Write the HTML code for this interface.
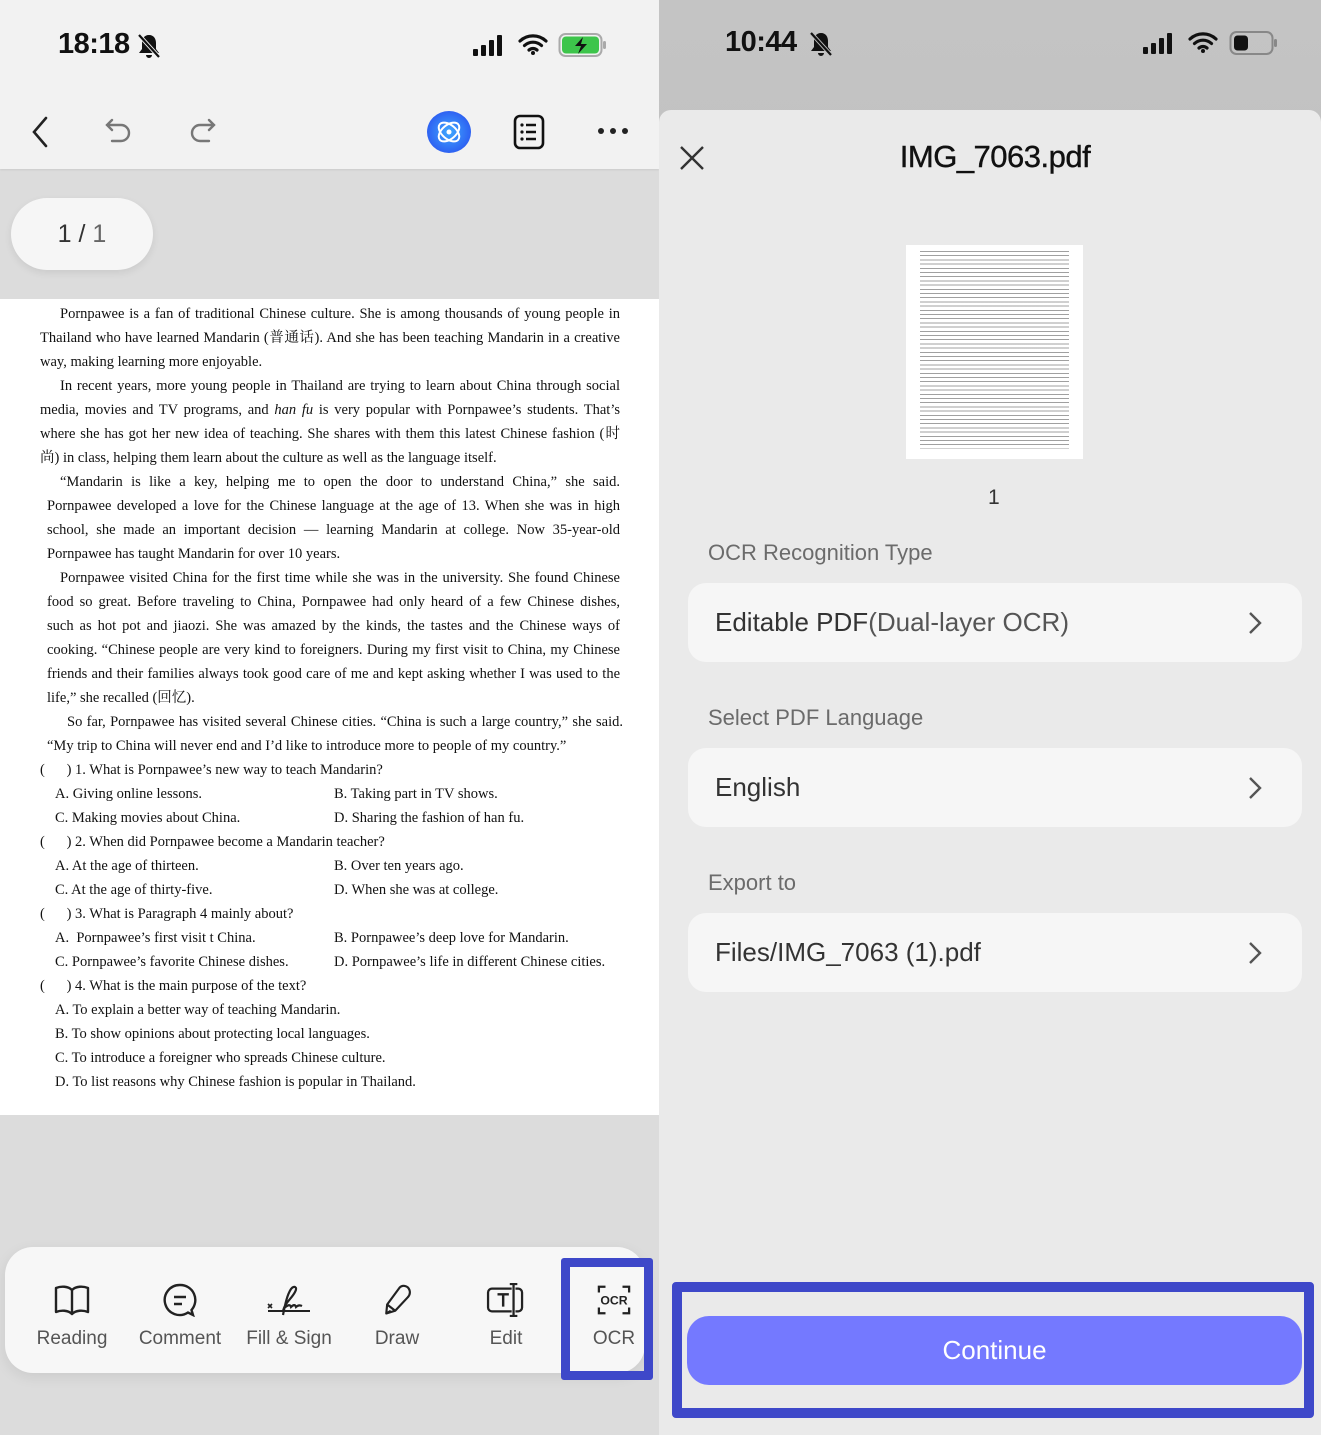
<!DOCTYPE html>
<html><head><meta charset="utf-8">
<style>
*{margin:0;padding:0;box-sizing:border-box}
body{width:1321px;height:1435px;position:relative;overflow:hidden;background:#dcdcdc;font-family:"Liberation Sans","Noto Sans CJK SC",sans-serif}
.abs{position:absolute}
#left{position:absolute;left:0;top:0;width:659px;height:1435px;background:#dcdcdc}
#ltop{position:absolute;left:0;top:0;width:659px;height:169px;background:#f2f2f2;box-shadow:0 1px 2px rgba(0,0,0,.08)}
.time{font-size:29px;font-weight:bold;color:#111;letter-spacing:-0.5px}
#page{position:absolute;left:0;top:299px;width:659px;height:816px;background:#fff;font-family:"Liberation Serif","Noto Serif CJK SC",serif;font-size:14.5px;color:#111}
.ln{position:absolute;height:24px;line-height:24px;white-space:nowrap;margin-top:1px}
.j{text-align:justify;text-align-last:justify;white-space:normal;overflow:hidden}
#tb{position:absolute;left:5px;top:1247px;width:640px;height:126px;background:#f7f7f7;border-radius:28px;box-shadow:0 4px 14px rgba(0,0,0,.08)}
.ti{position:absolute;top:1283px;width:100px;text-align:center}
.ti svg{display:block;margin:0 auto}
.ti span{display:block;margin-top:11px;font-size:19px;color:#555}
#right{position:absolute;left:659px;top:0;width:662px;height:1435px;background:linear-gradient(#c4c4c4,#b2b2b2)}
#sheet{position:absolute;left:659px;top:110px;width:662px;height:1325px;background:#eaeaea;border-radius:12px 12px 0 0}
.lab{position:absolute;left:708px;font-size:22px;color:#6b6b6b}
.card{position:absolute;left:688px;width:614px;height:79px;background:#f6f6f6;border-radius:18px;font-size:26px;color:#333;padding-left:27px;line-height:79px}
.card svg{position:absolute;right:40px;top:28px}
</style></head><body>
<div id="left">
<div id="ltop"></div>
<div class="abs time" style="left:58px;top:28px">18:18</div>
<svg class="abs" style="left:136px;top:32px" width="26" height="28" viewBox="0 0 26 28"><path d="M13 3c-5 0-7 4-7 8v6l-3 4h20l-3-4v-6c0-4-2-8-7-8zM10 23a3 3 0 0 0 6 0z" fill="#111"/><path d="M3 3l20 22" stroke="#f2f2f2" stroke-width="4"/><path d="M3 3l20 22" stroke="#111" stroke-width="2.2"/></svg>
<svg class="abs" style="left:472px;top:34px" width="36" height="22"><rect x="1" y="15" width="5" height="7" rx="1" fill="#111"/><rect x="9" y="11" width="5" height="11" rx="1" fill="#111"/><rect x="17" y="6" width="5" height="16" rx="1" fill="#111"/><rect x="25" y="1" width="5" height="21" rx="1" fill="#111"/></svg>
<svg class="abs" style="left:518px;top:33px" width="30" height="22" viewBox="0 0 30 22"><path d="M2 8a19 19 0 0 1 26 0M6.5 12.5a12.5 12.5 0 0 1 17 0M11 17a6 6 0 0 1 8 0" stroke="#111" stroke-width="3.2" fill="none" stroke-linecap="round"/><circle cx="15" cy="20" r="2" fill="#111"/></svg>
<svg class="abs" style="left:558px;top:32px" width="50" height="26"><rect x="1.5" y="2" width="42" height="22" rx="6" fill="none" stroke="#aaa" stroke-width="2"/><rect x="4" y="4.5" width="37" height="17" rx="4" fill="#3dc54b"/><rect x="45" y="9" width="3" height="8" rx="1.5" fill="#aaa"/><path d="M25 5l-8 9h6l-3 8 9-10h-6z" fill="#111"/></svg>
<svg class="abs" style="left:28px;top:116px" width="24" height="32"><path d="M18 2L6 16l12 14" stroke="#222" stroke-width="2.6" fill="none" stroke-linecap="round"/></svg>
<svg class="abs" style="left:103px;top:117px" width="32" height="28"><path d="M9 3L4 8l5 5M4 8h14a8 8 0 0 1 0 16H9" stroke="#777" stroke-width="2.4" fill="none" stroke-linecap="round"/></svg>
<svg class="abs" style="left:186px;top:117px" width="32" height="28"><path d="M23 3l5 5-5 5M28 8H14a8 8 0 0 0 0 16h9" stroke="#777" stroke-width="2.4" fill="none" stroke-linecap="round"/></svg>
<div class="abs" style="left:427px;top:111px;width:44px;height:42px;border-radius:50%;background:radial-gradient(#3fa8ff,#2e62f2 70%,#55a9ff)"></div>
<svg class="abs" style="left:432px;top:116px" width="34" height="32"><ellipse cx="17" cy="16" rx="12" ry="7" transform="rotate(-40 17 16)" stroke="#fff" stroke-width="2" fill="none"/><ellipse cx="17" cy="16" rx="12" ry="7" transform="rotate(40 17 16)" stroke="#fff" stroke-width="2" fill="none"/><circle cx="17" cy="16" r="2.5" fill="#fff"/></svg>
<svg class="abs" style="left:512px;top:114px" width="34" height="36"><rect x="3" y="2" width="28" height="32" rx="5" stroke="#111" stroke-width="2.6" fill="none"/><circle cx="10" cy="11" r="1.6" fill="#111"/><circle cx="10" cy="18" r="1.6" fill="#111"/><circle cx="10" cy="25" r="1.6" fill="#111"/><path d="M14 11h10M14 18h10M14 25h10" stroke="#111" stroke-width="2.4"/></svg>
<svg class="abs" style="left:596px;top:126px" width="34" height="10"><circle cx="5" cy="5" r="3" fill="#222"/><circle cx="17" cy="5" r="3" fill="#222"/><circle cx="29" cy="5" r="3" fill="#222"/></svg>
<div class="abs" style="left:11px;top:198px;width:142px;height:72px;border-radius:36px;background:#f6f6f6;box-shadow:0 3px 8px rgba(0,0,0,.08);text-align:center;line-height:72px;font-size:25px;color:#333">1 / <span style="color:#666">1</span></div>

<div id="page">
<div class="ln j" style="left:60px;width:560px;top:2px">Pornpawee is a fan of traditional Chinese culture. She is among thousands of young people in</div>
<div class="ln j" style="left:40px;width:580px;top:26px">Thailand who have learned Mandarin (普通话). And she has been teaching Mandarin in a creative</div>
<div class="ln" style="left:40px;top:50px">way, making learning more enjoyable.</div>
<div class="ln j" style="left:60px;width:560px;top:74px">In recent years, more young people in Thailand are trying to learn about China through social</div>
<div class="ln j" style="left:40px;width:580px;top:98px">media, movies and TV programs, and <i>han fu</i> is very popular with Pornpawee’s students. That’s</div>
<div class="ln j" style="left:40px;width:580px;top:122px">where she has got her new idea of teaching. She shares with them this latest Chinese fashion (时</div>
<div class="ln" style="left:40px;top:146px">尚) in class, helping them learn about the culture as well as the language itself.</div>
<div class="ln j" style="left:60px;width:560px;top:170px">“Mandarin is like a key, helping me to open the door to understand China,” she said.</div>
<div class="ln j" style="left:47px;width:573px;top:194px">Pornpawee developed a love for the Chinese language at the age of 13. When she was in high</div>
<div class="ln j" style="left:47px;width:573px;top:218px">school, she made an important decision — learning Mandarin at college. Now 35-year-old</div>
<div class="ln" style="left:47px;top:242px">Pornpawee has taught Mandarin for over 10 years.</div>
<div class="ln j" style="left:60px;width:560px;top:266px">Pornpawee visited China for the first time while she was in the university. She found Chinese</div>
<div class="ln j" style="left:47px;width:573px;top:290px">food so great. Before traveling to China, Pornpawee had only heard of a few Chinese dishes,</div>
<div class="ln j" style="left:47px;width:573px;top:314px">such as hot pot and jiaozi. She was amazed by the kinds, the tastes and the Chinese ways of</div>
<div class="ln j" style="left:47px;width:573px;top:338px">cooking. “Chinese people are very kind to foreigners. During my first visit to China, my Chinese</div>
<div class="ln j" style="left:47px;width:573px;top:362px">friends and their families always took good care of me and kept asking whether I was used to the</div>
<div class="ln" style="left:47px;top:386px">life,” she recalled (回忆).</div>
<div class="ln j" style="left:67px;width:556px;top:410px">So far, Pornpawee has visited several Chinese cities. “China is such a large country,” she said.</div>
<div class="ln" style="left:47px;top:434px">“My trip to China will never end and I’d like to introduce more to people of my country.”</div>
<div class="ln" style="left:40px;top:458px">(&nbsp;&nbsp;&nbsp;&nbsp;&nbsp;&nbsp;) 1. What is Pornpawee’s new way to teach Mandarin?</div>
<div class="ln" style="left:55px;top:482px">A. Giving online lessons.</div><div class="ln" style="left:334px;top:482px">B. Taking part in TV shows.</div>
<div class="ln" style="left:55px;top:506px">C. Making movies about China.</div><div class="ln" style="left:334px;top:506px">D. Sharing the fashion of han fu.</div>
<div class="ln" style="left:40px;top:530px">(&nbsp;&nbsp;&nbsp;&nbsp;&nbsp;&nbsp;) 2. When did Pornpawee become a Mandarin teacher?</div>
<div class="ln" style="left:55px;top:554px">A. At the age of thirteen.</div><div class="ln" style="left:334px;top:554px">B. Over ten years ago.</div>
<div class="ln" style="left:55px;top:578px">C. At the age of thirty-five.</div><div class="ln" style="left:334px;top:578px">D. When she was at college.</div>
<div class="ln" style="left:40px;top:602px">(&nbsp;&nbsp;&nbsp;&nbsp;&nbsp;&nbsp;) 3. What is Paragraph 4 mainly about?</div>
<div class="ln" style="left:55px;top:626px">A.&nbsp; Pornpawee’s first visit t China.</div><div class="ln" style="left:334px;top:626px">B. Pornpawee’s deep love for Mandarin.</div>
<div class="ln" style="left:55px;top:650px">C. Pornpawee’s favorite Chinese dishes.</div><div class="ln" style="left:334px;top:650px">D. Pornpawee’s life in different Chinese cities.</div>
<div class="ln" style="left:40px;top:674px">(&nbsp;&nbsp;&nbsp;&nbsp;&nbsp;&nbsp;) 4. What is the main purpose of the text?</div>
<div class="ln" style="left:55px;top:698px">A. To explain a better way of teaching Mandarin.</div>
<div class="ln" style="left:55px;top:722px">B. To show opinions about protecting local languages.</div>
<div class="ln" style="left:55px;top:746px">C. To introduce a foreigner who spreads Chinese culture.</div>
<div class="ln" style="left:55px;top:770px">D. To list reasons why Chinese fashion is popular in Thailand.</div>
</div>

<div id="tb"></div>
<div class="ti" style="left:22px"><svg width="38" height="34" viewBox="0 0 38 34"><path d="M19 7C15 3 8 3 3 5v24c5-2 12-2 16 2 4-4 11-4 16-2V5c-5-2-12-2-16 2zM19 7v24" stroke="#222" stroke-width="2.4" fill="none" stroke-linejoin="round"/></svg><span>Reading</span></div>
<div class="ti" style="left:130px"><svg width="38" height="34" viewBox="0 0 38 34"><path d="M19 2a15 15 0 1 0 8 27.5l5 2.5-1.5-5A15 15 0 0 0 19 2z" stroke="#222" stroke-width="2.4" fill="none"/><path d="M13 14h12M13 21h8" stroke="#222" stroke-width="2.4"/></svg><span>Comment</span></div>
<div class="ti" style="left:239px"><svg width="44" height="34" viewBox="0 0 44 34"><path d="M1 21l4 4M5 21l-4 4" stroke="#222" stroke-width="1.6"/><path d="M16 32c2-10 4-20 8-26 3-4 7-2 4 3-3 6-9 10-11 16 4-3 6-4 7-1 2-2 4-3 5 0 2-2 4-2 6-1" stroke="#222" stroke-width="2.2" fill="none"/><path d="M1 28h42" stroke="#222" stroke-width="2"/></svg><span>Fill &amp; Sign</span></div>
<div class="ti" style="left:347px"><svg width="36" height="34" viewBox="0 0 36 38"><path d="M6 34l1-10L21 5c3-3 8-2 10 1s2 7-1 10L16 31z" stroke="#222" stroke-width="2.4" fill="none" stroke-linejoin="round"/><path d="M7 24l9 7M6 34l5-3" stroke="#222" stroke-width="2.4"/></svg><span>Draw</span></div>
<div class="ti" style="left:456px"><svg width="42" height="34" viewBox="0 0 42 36"><rect x="2" y="6" width="36" height="24" rx="4" stroke="#222" stroke-width="2.4" fill="none"/><path d="M12 12h12M18 12v13" stroke="#222" stroke-width="2.6"/><rect x="27" y="3" width="4" height="30" fill="#f7f7f7"/><path d="M29 1v34M25 1h8M25 35h8" stroke="#222" stroke-width="2.4"/></svg><span>Edit</span></div>
<div class="ti" style="left:564px"><svg width="38" height="34" viewBox="0 0 38 36"><path d="M3 10V4h7M28 4h7v6M35 26v6h-7M10 32H3v-6" stroke="#222" stroke-width="2.4" fill="none"/><text x="19" y="23" text-anchor="middle" font-family="Liberation Sans Narrow,Liberation Sans,sans-serif" font-weight="bold" font-size="13" fill="#222">OCR</text></svg><span>OCR</span></div>
<div class="abs" style="left:561px;top:1258px;width:92px;height:122px;border:9px solid #3e48c9;border-radius:3px"></div>
</div>

<div id="right"></div>
<div id="sheet"></div>
<div class="abs time" style="left:725px;top:26px">10:44</div>
<svg class="abs" style="left:808px;top:30px" width="26" height="28" viewBox="0 0 26 28"><path d="M13 3c-5 0-7 4-7 8v6l-3 4h20l-3-4v-6c0-4-2-8-7-8zM10 23a3 3 0 0 0 6 0z" fill="#111"/><path d="M3 3l20 22" stroke="#bfbfbf" stroke-width="4"/><path d="M3 3l20 22" stroke="#111" stroke-width="2.2"/></svg>
<svg class="abs" style="left:1142px;top:32px" width="36" height="22"><rect x="1" y="15" width="5" height="7" rx="1" fill="#111"/><rect x="9" y="11" width="5" height="11" rx="1" fill="#111"/><rect x="17" y="6" width="5" height="16" rx="1" fill="#111"/><rect x="25" y="1" width="5" height="21" rx="1" fill="#111"/></svg>
<svg class="abs" style="left:1188px;top:31px" width="30" height="22" viewBox="0 0 30 22"><path d="M2 8a19 19 0 0 1 26 0M6.5 12.5a12.5 12.5 0 0 1 17 0M11 17a6 6 0 0 1 8 0" stroke="#111" stroke-width="3.2" fill="none" stroke-linecap="round"/><circle cx="15" cy="20" r="2" fill="#111"/></svg>
<svg class="abs" style="left:1229px;top:30px" width="50" height="26"><rect x="1.5" y="2" width="42" height="22" rx="6" fill="none" stroke="#888" stroke-width="2"/><rect x="5" y="5.5" width="14" height="15" rx="3.5" fill="#111"/><rect x="45" y="9" width="3" height="8" rx="1.5" fill="#888"/></svg>
<svg class="abs" style="left:679px;top:145px" width="26" height="26"><path d="M2 2l22 22M24 2L2 24" stroke="#333" stroke-width="2.4"/></svg>
<div class="abs" style="left:659px;top:139px;width:672px;text-align:center;font-size:31px;color:#111;letter-spacing:-0.5px;-webkit-text-stroke:0.4px #111">IMG_7063.pdf</div>
<div class="abs" style="left:906px;top:245px;width:177px;height:214px;background:#fff;padding:4px 14px">
<div style="height:200px;background:repeating-linear-gradient(#fff 0,#fff 2px,#888 2px,#888 3px,#fff 3px,#fff 4.2px);opacity:.8"></div></div>
<div class="abs" style="left:988px;top:486px;font-size:21px;color:#333">1</div>
<div class="lab" style="top:540px">OCR Recognition Type</div>
<div class="card" style="top:583px">Editable PDF<span style="color:#555">(Dual-layer OCR)</span><svg width="14" height="24"><path d="M2 2l10 10-10 10" stroke="#555" stroke-width="2.4" fill="none"/></svg></div>
<div class="lab" style="top:705px">Select PDF Language</div>
<div class="card" style="top:748px">English<svg width="14" height="24"><path d="M2 2l10 10-10 10" stroke="#555" stroke-width="2.4" fill="none"/></svg></div>
<div class="lab" style="top:870px">Export to</div>
<div class="card" style="top:913px">Files/IMG_7063 (1).pdf<svg width="14" height="24"><path d="M2 2l10 10-10 10" stroke="#555" stroke-width="2.4" fill="none"/></svg></div>
<div class="abs" style="left:672px;top:1282px;width:642px;height:136px;border:10px solid #3e48c9;border-radius:4px"></div>
<div class="abs" style="left:687px;top:1316px;width:615px;height:69px;background:#7479ff;border-radius:22px;color:#fff;text-align:center;line-height:69px;font-size:26px">Continue</div>
</body></html>
